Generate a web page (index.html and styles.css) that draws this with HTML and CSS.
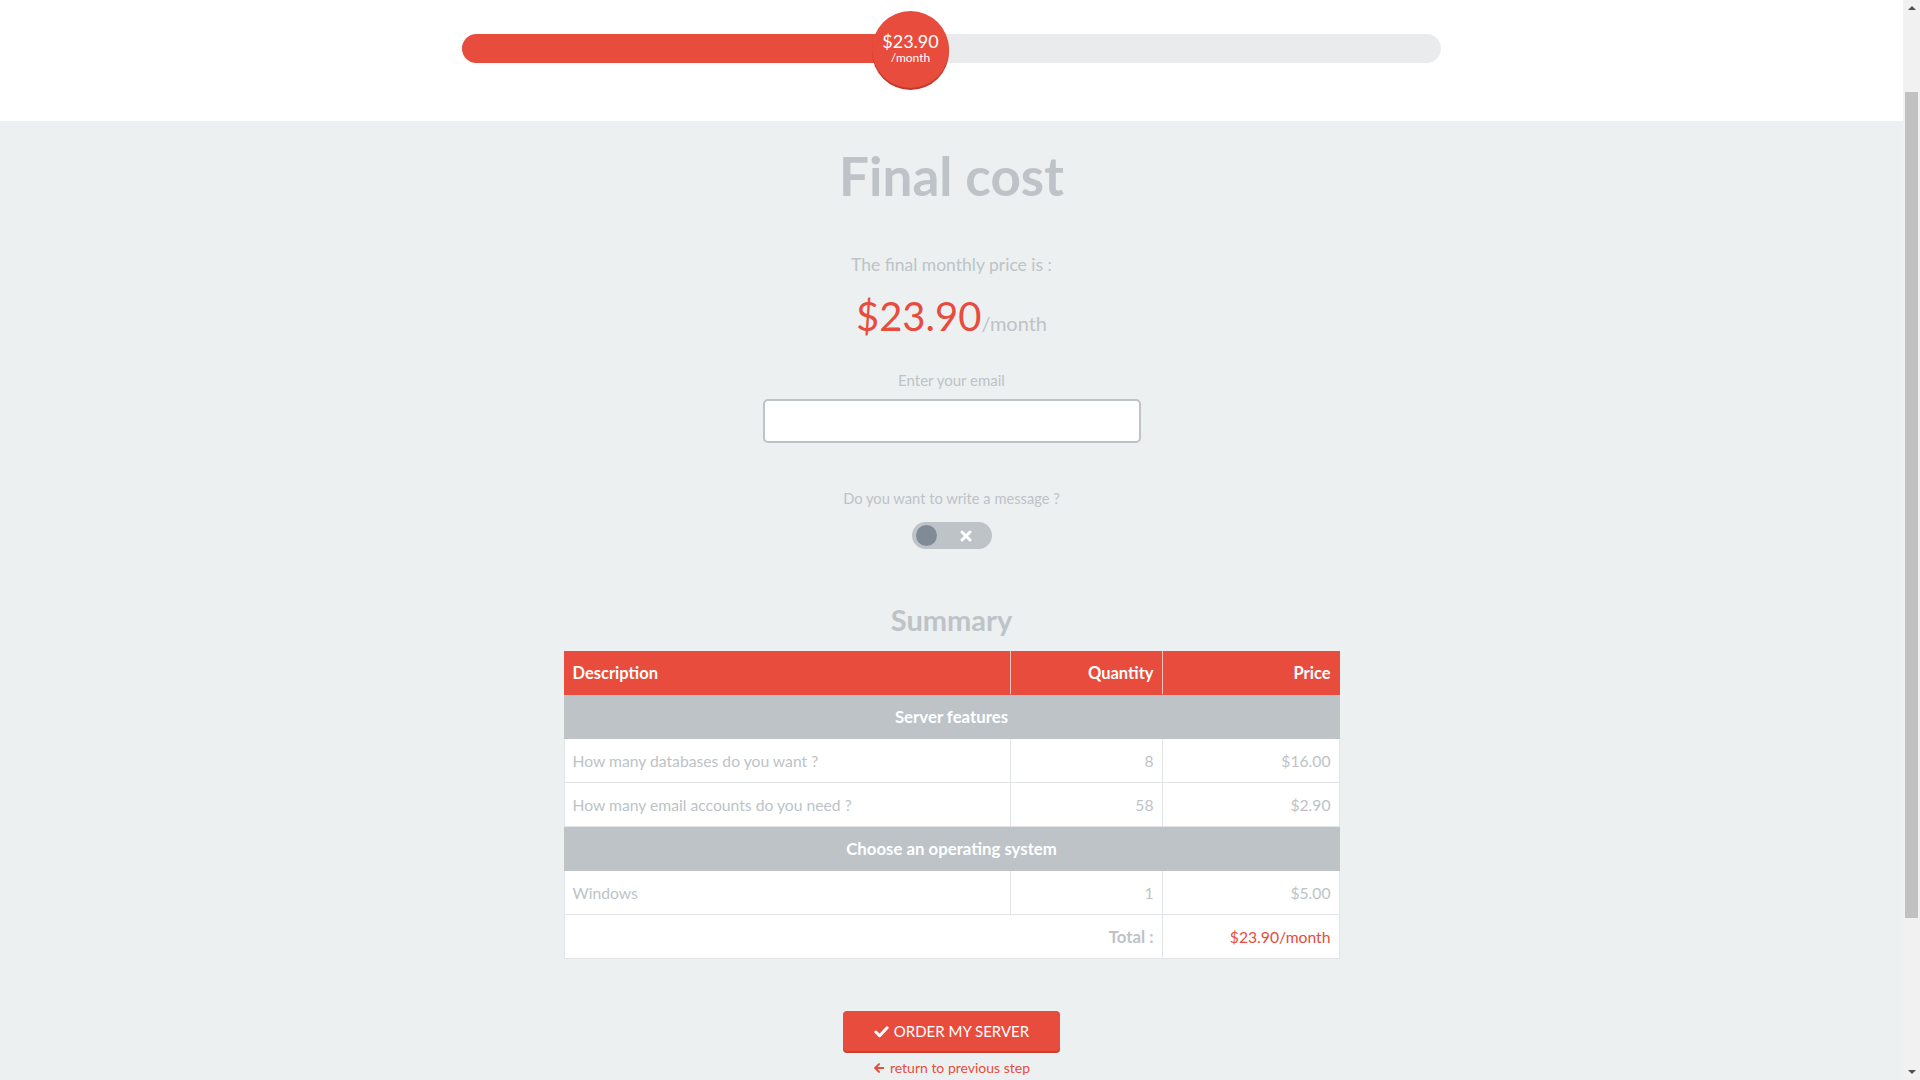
FILE: index.html
```html
<!DOCTYPE html>
<html lang="en">
<head>
<meta charset="utf-8">
<title>Final cost</title>
<link rel="stylesheet" href="styles.css">
</head>
<body>
<div class="frame">
  <div class="page">
    <header class="top-band">
      <div class="slider">
        <div class="slider-fill" style="width: 448px"></div>
        <div class="slider-handle" style="left: 448px">
          <span class="handle-price">$23.90</span>
          <span class="handle-unit">/month</span>
        </div>
      </div>
    </header>

    <main class="content">
      <h1 class="title">Final cost</h1>
      <p class="subtitle">The final monthly price is :</p>
      <p class="price"><span class="price-value">$23.90</span><span class="price-unit">/month</span></p>

      <label class="field-label" for="email">Enter your email</label>
      <input class="email-input" id="email" type="email">

      <p class="field-label message-label">Do you want to write a message ?</p>
      <div class="toggle">
        <span class="toggle-knob"></span>
        <svg class="toggle-x" viewBox="0 0 12 12" width="12" height="12"><path d="M2 2 L10 10 M10 2 L2 10" stroke="#fff" stroke-width="3" stroke-linecap="round"/></svg>
      </div>

      <h2 class="summary-title">Summary</h2>
      <table class="summary">
        <thead>
          <tr>
            <th class="col-desc">Description</th>
            <th class="col-qty">Quantity</th>
            <th class="col-price">Price</th>
          </tr>
        </thead>
        <tbody>
          <tr class="group"><td colspan="3">Server features</td></tr>
          <tr>
            <td>How many databases do you want ?</td>
            <td class="num">8</td>
            <td class="num">$16.00</td>
          </tr>
          <tr>
            <td>How many email accounts do you need ?</td>
            <td class="num">58</td>
            <td class="num">$2.90</td>
          </tr>
          <tr class="group"><td colspan="3">Choose an operating system</td></tr>
          <tr>
            <td>Windows</td>
            <td class="num">1</td>
            <td class="num">$5.00</td>
          </tr>
          <tr class="total">
            <td colspan="2" class="num total-label">Total :</td>
            <td class="num total-value">$23.90/month</td>
          </tr>
        </tbody>
      </table>

      <button class="order-btn" type="button">
        <svg class="check" viewBox="0 0 16 16" width="15" height="15"><path d="M2 8.5 L6 12.5 L14 4" fill="none" stroke="#fff" stroke-width="3.2" stroke-linecap="round" stroke-linejoin="round"/></svg>
        ORDER MY SERVER
      </button>
      <a class="back-link" href="#">
        <svg class="arrow" viewBox="0 0 14 14" width="12" height="12"><path d="M12 7 H2.5 M7 2.5 L2.5 7 L7 11.5" fill="none" stroke="#e74c3c" stroke-width="2.4" stroke-linecap="round" stroke-linejoin="round"/></svg>
        return to previous step
      </a>
    </main>
  </div>

  <div class="scrollbar">
    <div class="scroll-arrow up"></div>
    <div class="scroll-track">
      <div class="scroll-thumb"></div>
    </div>
    <div class="scroll-arrow down"></div>
  </div>
</div>
</body>
</html>
```

FILE: styles.css
```css
* { box-sizing: border-box; }

html, body {
  margin: 0;
  height: 1080px;
  overflow: hidden;
}

body {
  background: #ecf0f1;
  font-family: Lato, "Open Sans", sans-serif;
  color: #bdc3c7;
}

.frame {
  display: flex;
  height: 1080px;
}

.page {
  flex: 1;
  overflow: hidden;
}

/* top slider band */
.top-band {
  background: #fff;
  height: 121px;
  display: flex;
  justify-content: center;
  padding-top: 34px;
}

.slider {
  position: relative;
  width: 979px;
  height: 29px;
  background: #e9ebec;
  border-radius: 15px;
}

.slider-fill {
  height: 100%;
  background: #e74c3c;
  border-radius: 15px 0 0 15px;
}

.slider-handle {
  position: absolute;
  top: 15px;
  width: 77px;
  height: 77px;
  margin-left: -38px;
  margin-top: -38px;
  padding-bottom: 4px;
  border-radius: 50%;
  background: #e74c3c;
  box-shadow: 0 2px 0 #c0392b;
  display: flex;
  flex-direction: column;
  align-items: center;
  justify-content: center;
  color: #fff;
}

.handle-price {
  font-size: 18px;
  line-height: 19px;
}

.handle-unit {
  font-size: 12px;
  line-height: 13px;
}

/* main column */
.content {
  display: flex;
  flex-direction: column;
  align-items: center;
}

.title {
  margin: 23px 0 0;
  font-size: 53px;
  line-height: 64px;
  font-weight: 700;
  color: #bdc3c7;
}

.subtitle {
  margin: 45px 0 0;
  font-size: 17.5px;
  line-height: 24px;
}

.price {
  margin: 15px 0 0;
  line-height: 48px;
}

.price-value {
  font-size: 40px;
  color: #e74c3c;
}

.price-unit {
  font-size: 20px;
  color: #bdc3c7;
}

.field-label {
  display: block;
  margin: 21px 0 0;
  font-size: 15px;
  line-height: 20px;
}

.email-input {
  margin-top: 9px;
  width: 378px;
  height: 44px;
  border: 2px solid #bdc3c7;
  border-radius: 5px;
  background: #fff;
  outline: none;
}

.message-label {
  margin-top: 45px;
  font-size: 14.7px;
}

.toggle {
  margin-top: 14px;
  width: 80px;
  height: 27px;
  border-radius: 14px;
  background: #bdc3c7;
  display: flex;
  align-items: center;
  padding-left: 4px;
}

.toggle-knob {
  width: 21px;
  height: 21px;
  border-radius: 50%;
  background: #7f8c98;
}

.toggle-x {
  margin-left: 23px;
}

.summary-title {
  margin: 53px 0 0;
  font-size: 29px;
  line-height: 36px;
  font-weight: 700;
  color: #bdc3c7;
}

/* summary table */
.summary {
  margin-top: 13px;
  width: 776px;
  border-collapse: collapse;
  background: #fff;
  font-size: 15.7px;
}

.summary th,
.summary td {
  height: 44px;
  padding: 0 8px;
  border: 1px solid #e1e5e7;
}

.summary th {
  height: 43px;
  background: #e74c3c;
  color: #fff;
  font-size: 16.5px;
  font-weight: 700;
  border-color: #e74c3c;
}

.summary th + th { border-left-color: #f5c2bc; }
.summary th:not(:last-child) { border-right-color: #f5c2bc; }

.col-desc { width: 446px; text-align: left; }
.col-qty { width: 152px; text-align: right; }
.col-price { text-align: right; }

.summary .group td {
  background: #bdc3c7;
  color: #fff;
  font-size: 16.8px;
  font-weight: 700;
  text-align: center;
  border-color: #bdc3c7;
}

.summary td { color: #bdc3c7; }
.summary td.num { text-align: right; }
.summary .total-label { font-weight: 700; font-size: 16.8px; }
.summary .total-value { color: #e74c3c; }

/* actions */
.order-btn {
  margin-top: 52px;
  width: 217px;
  height: 40px;
  border: 0;
  border-radius: 4px;
  background: #e74c3c;
  box-shadow: 0 2px 0 #c9402f;
  color: #fff;
  font-family: inherit;
  font-size: 15px;
  display: flex;
  align-items: center;
  justify-content: center;
  gap: 5px;
  padding: 0;
}

.back-link {
  margin-top: 8px;
  color: #e74c3c;
  text-decoration: none;
  font-size: 14px;
  line-height: 18px;
  display: flex;
  align-items: center;
  gap: 5px;
}

/* window scrollbar */
.scrollbar {
  width: 17px;
  background: #f1f1f1;
  display: flex;
  flex-direction: column;
}

.scroll-arrow {
  height: 17px;
  position: relative;
}

.scroll-arrow::after {
  content: "";
  position: absolute;
  left: 5px;
  border-left: 4px solid transparent;
  border-right: 4px solid transparent;
}

.scroll-arrow.up::after { top: 6px; border-bottom: 4px solid #505050; }
.scroll-arrow.down::after { top: 7px; border-top: 4px solid #505050; }

.scroll-track {
  flex: 1;
  padding: 75px 2px 145px;
  display: flex;
}

.scroll-thumb {
  flex: 1;
  background: #c1c1c1;
}
```
